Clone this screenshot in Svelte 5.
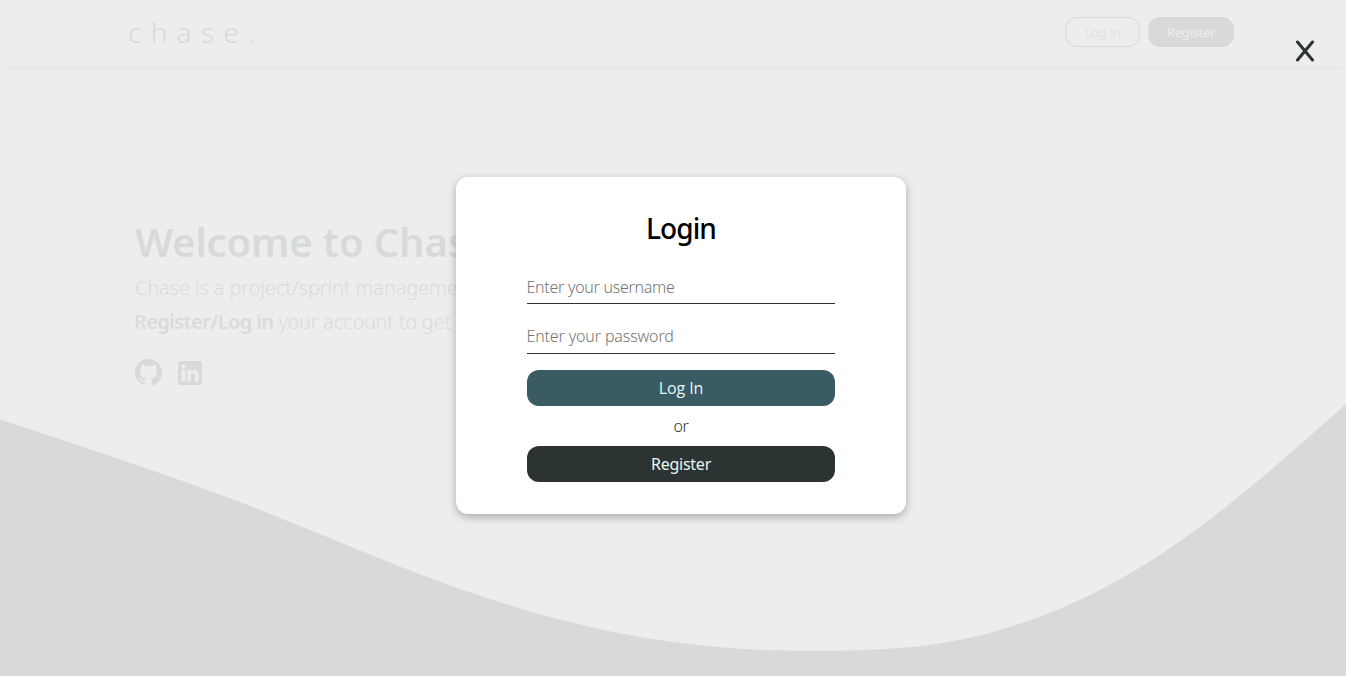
<script lang="ts">
  let username = $state('');
  let password = $state('');
</script>

<div class="page">
  <svg class="wave" viewBox="0 0 1346 676" preserveAspectRatio="none" aria-hidden="true">
    <path d="M0 419.500C75 444 150 469 224 496C299 524 374 558 449 585C524 612 598 632 673 642C748 652 823 653 900 648C975 642 1048 620 1122 578C1197 536 1271 471 1346 404V676H0Z" />
  </svg>

  <header>
    <span class="logo">chase.</span>
    <nav>
      <button class="pill outline"><span>Log in</span></button>
      <button class="pill filled"><span>Register</span></button>
    </nav>
  </header>

  <main>
    <h1>Welcome to Chase</h1>
    <p class="intro">Chase is a project/sprint management</p>
    <p class="intro second"><strong>Register/Log in</strong> <span>your account to get started</span></p>
    <div class="social">
      <svg width="27" height="27" viewBox="0 0 16 16" role="img"><path d="M8 0C3.580 0 0 3.580 0 8c0 3.540 2.290 6.530 5.470 7.590.4.070.55-.17.55-.38 0-.19-.01-.82-.01-1.490-2.010.37-2.530-.49-2.690-.94-.09-.23-.48-.94-.82-1.130-.28-.15-.68-.52-.01-.53.63-.01 1.080.58 1.230.82.72 1.210 1.870.87 2.330.66.07-.52.28-.87.51-1.070-1.780-.2-3.640-.89-3.640-3.950 0-.87.31-1.590.82-2.150-.08-.2-.36-1.020.08-2.120 0 0 .67-.21 2.200.82A7.700 7.700 0 0 1 8 3.870c.68 0 1.360.09 2 .27 1.530-1.040 2.200-.82 2.200-.82.44 1.100.16 1.920.08 2.120.51.56.82 1.270.82 2.150 0 3.070-1.870 3.750-3.650 3.950.29.25.54.73.54 1.480 0 1.070-.01 1.930-.01 2.200 0 .21.15.46.55.38A8.010 8.010 0 0 0 16 8c0-4.420-3.580-8-8-8z" /></svg>
      <svg width="24" height="28" viewBox="0 0 448 512" role="img"><path d="M416 32H31.900C14.300 32 0 46.500 0 64.300v383.400C0 465.500 14.300 480 31.900 480H416c17.600 0 32-14.500 32-32.300V64.300c0-17.800-14.400-32.300-32-32.300zM135.400 416H69V202.200h66.500V416zm-33.200-243c-21.300 0-38.500-17.300-38.500-38.500S80.900 96 102.200 96c21.200 0 38.500 17.300 38.500 38.500 0 21.300-17.200 38.500-38.500 38.500zm282.100 243h-66.400V312c0-24.800-.5-56.700-34.500-56.700-34.600 0-39.900 27-39.900 54.900V416h-66.400V202.200h63.700v29.200h.9c8.900-16.800 30.600-34.500 62.900-34.500 67.200 0 79.700 44.300 79.700 101.900V416z" /></svg>
    </div>
  </main>

  <form class="dialog" onsubmit={(e) => e.preventDefault()}>
    <h2><span>Login</span></h2>
    <input type="text" placeholder="Enter your username" bind:value={username} />
    <input class="pass" type="password" placeholder="Enter your password" bind:value={password} />
    <button class="action login"><span>Log In</span></button>
    <span class="or">or</span>
    <button class="action register" type="button"><span>Register</span></button>
  </form>

  <button class="close" aria-label="Close">
    <svg width="20" height="22" viewBox="0 0 20 22"><path d="M2.500 2L17.500 20M17.500 2L2.500 20" /></svg>
  </button>
</div>

<style>
  :global(body) { margin: 0; }
  .page {
    position: relative;
    width: 100%;
    height: 676px;
    overflow: hidden;
    background: #ededed;
    color: #d8dad9;
    font-family: "Noto Sans", "Open Sans", sans-serif;
  }
  .wave { position: absolute; inset: 0; width: 100%; height: 100%; fill: #d8dad9; }
  button { font-family: inherit; margin: 0; cursor: pointer; }
  header {
    position: relative;
    box-sizing: border-box;
    height: 66px;
    display: flex;
    justify-content: space-between;
    padding: 16px 112px 0 128px;
    box-shadow: 0 3px 6px rgba(0, 0, 0, .025);
  }
  .logo { font: 350 28px/32px "Noto Sans", sans-serif; letter-spacing: 9.300px; }
  nav { display: flex; gap: 8px; padding-top: 1px; }
  .pill {
    box-sizing: border-box;
    height: 30px;
    padding: 0;
    border: 1px solid #d8dad9;
    border-radius: 12px;
    font-size: 13px;
    line-height: 28px;
  }
  .outline { width: 75px; background: transparent; color: #dddbdc; font-weight: 350; letter-spacing: -.15px; }
  .filled { width: 86px; background: #d8dad9; color: #ededed; letter-spacing: -.3px; }
  main { position: relative; padding: 147px 0 0 135px; white-space: nowrap; }
  h1 { margin: 0; font-size: 40px; line-height: 58px; font-weight: 600; letter-spacing: -.15px; }
  .intro { margin: 0; font-size: 20px; line-height: 34px; font-weight: 300; letter-spacing: -.13px; color: #d8dcdb; }
  .intro strong { margin-left: -1px; font-weight: 600; letter-spacing: -.6px; }
  .second { letter-spacing: -.25px; }
  .social { display: flex; align-items: flex-start; gap: 16px; margin-top: 20px; }
  .social svg { fill: #d8dad9; }
  .dialog {
    position: absolute;
    left: 456px;
    top: 177px;
    box-sizing: border-box;
    width: 450px;
    height: 337px;
    padding: 29px 71px 32px;
    display: flex;
    flex-direction: column;
    background: #fff;
    border-radius: 12px;
    box-shadow: 0 3px 8px rgba(0, 0, 0, .28);
    color: #2c3333;
  }
  h2 { margin: 0 0 21px; color: #000; text-align: center; font-size: 28px; line-height: 44px; font-weight: 500; letter-spacing: -.9px; }
  input {
    box-sizing: border-box;
    height: 33px;
    margin: 0;
    padding: 0 0 1px;
    border: 0;
    border-bottom: 1px solid #2c3333;
    border-radius: 0;
    background: transparent;
    outline: none;
    color: #2c3333;
    font: 350 16px "Noto Sans", sans-serif;
    letter-spacing: -.28px;
    text-indent: -.5px;
  }
  input::placeholder { color: #757575; opacity: 1; }
  .pass { margin-top: 17px; padding-bottom: 2px; letter-spacing: -.15px; }
  .action {
    height: 36px;
    padding: 0;
    border: 0;
    border-radius: 12px;
    color: #e7f6f2;
    font-size: 16px;
    line-height: 36px;
    letter-spacing: -.25px;
  }
  .login { margin-top: 16px; background: #395b64; font-family: "Open Sans", sans-serif; letter-spacing: -.1px; }
  .register { background: #2c3333; }
  .or { height: 40px; line-height: 40px; text-align: center; font-size: 16px; font-weight: 350; letter-spacing: -.3px; }
  .close {
    position: absolute;
    left: 1295px;
    top: 40px;
    display: flex;
    padding: 0;
    border: 0;
    background: none;
  }
  .close path { fill: none; stroke: #2c3333; stroke-width: 3; stroke-linecap: round; }
</style>
